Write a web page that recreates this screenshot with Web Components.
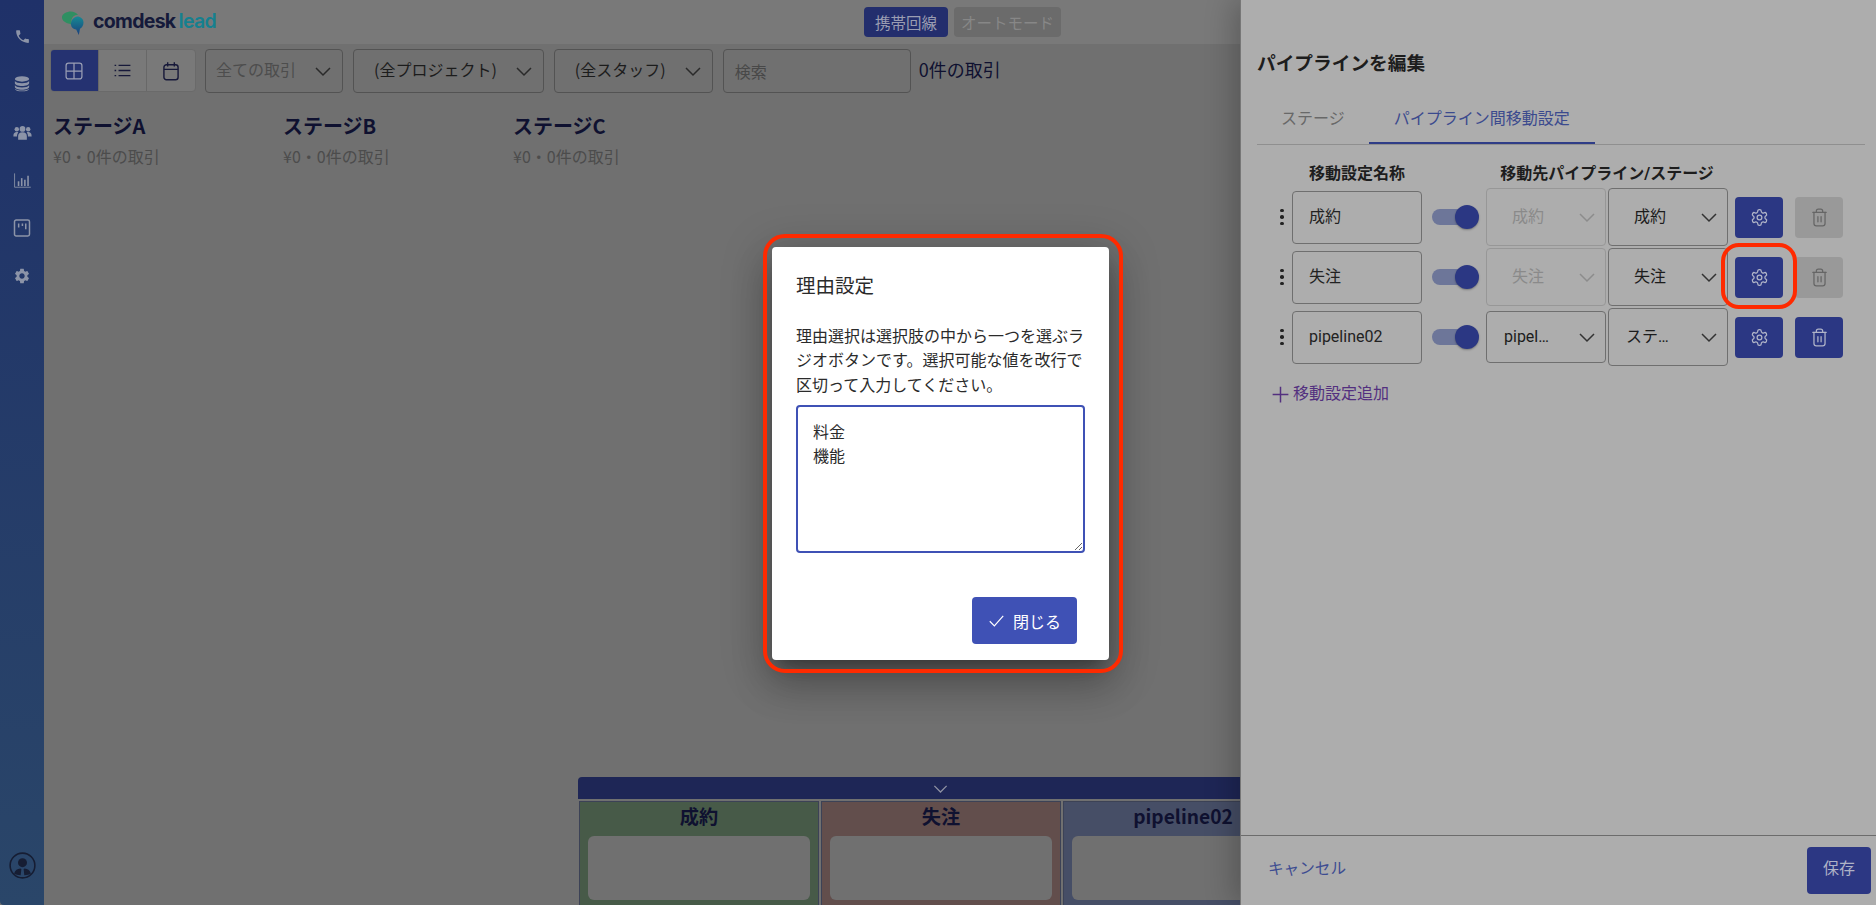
<!DOCTYPE html>
<html lang="ja">
<head>
<meta charset="utf-8">
<title>comdesk lead</title>
<style>
  html, body { margin: 0; height: 100%; overflow: hidden; background: #707070; }
  body { font-family: "Noto Sans CJK JP", "Noto Sans", sans-serif; }
</style>
</head>
<body>
<cd-app>
  <cd-sidebar slot="side"></cd-sidebar>
  <cd-header slot="head"></cd-header>
  <cd-toolbar slot="bar"></cd-toolbar>
  <cd-stage slot="stage" name="ステージA" sub="¥0・0件の取引"></cd-stage>
  <cd-stage slot="stage" name="ステージB" sub="¥0・0件の取引"></cd-stage>
  <cd-stage slot="stage" name="ステージC" sub="¥0・0件の取引"></cd-stage>
  <cd-drawer slot="bottom">
    <cd-drop name="成約" color="#475a48"></cd-drop>
    <cd-drop name="失注" color="#624e4c"></cd-drop>
    <cd-drop name="pipeline02" color="#464e66"></cd-drop>
  </cd-drawer>
  <cd-panel slot="over" heading="パイプラインを編集">
    <cd-move-row name="成約" a="成約" b="成約" locked></cd-move-row>
    <cd-move-row name="失注" a="失注" b="失注" locked marked></cd-move-row>
    <cd-move-row name="pipeline02" a="pipeline02" b="ステージA"></cd-move-row>
  </cd-panel>
  <cd-dialog slot="over" heading="理由設定">
    理由選択は選択肢の中から一つを選ぶラジオボタンです。選択可能な値を改行で区切って入力してください。
  </cd-dialog>
</cd-app>

<script>
(function() {
  const ICONS = {
    phone: '<path fill="currentColor" d="M6.6 10.8c1.4 2.8 3.8 5.1 6.6 6.6l2.2-2.2c.3-.3.7-.4 1-.2 1.1.4 2.3.6 3.6.6.6 0 1 .4 1 1V20c0 .6-.4 1-1 1C10.6 21 3 13.4 3 4c0-.6.4-1 1-1h3.5c.6 0 1 .4 1 1 0 1.3.2 2.5.6 3.6.1.3 0 .7-.2 1z"/>',
    database: '<g fill="currentColor"><ellipse cx="12" cy="5.2" rx="9.5" ry="3.7"/><path d="M2.5 8c1.4 1.9 5 3 9.5 3s8.100-1.100 9.500-3v3c0 2-4.200 3.600-9.500 3.600S2.500 13 2.500 11z"/><path d="M2.500 13.500c1.400 1.900 5 3 9.500 3s8.100-1.100 9.500-3V16c0 2-4.200 3.600-9.500 3.600S2.500 18 2.500 16z"/><path d="M2.500 18.300c1.400 1.500 5 2.400 9.500 2.400s8.100-.9 9.500-2.400c0 2-4.200 3.500-9.500 3.500s-9.500-1.500-9.500-3.500z"/></g>',
    users: '<g fill="currentColor"><circle cx="12" cy="7.500" r="3.600"/><circle cx="4.800" cy="8" r="2.800"/><circle cx="19.200" cy="8" r="2.800"/><path d="M6.500 21v-4.500c0-3 2-4.800 5.500-4.800s5.500 1.800 5.500 4.800V21z"/><path d="M.5 16c0-3 1.800-4.500 4.300-4.500.8 0 1.400.1 1.900.4-1 1.100-1.600 2.500-1.600 4.400v.7H.5z"/><path d="M23.500 16c0-3-1.800-4.500-4.300-4.500-.8 0-1.400.1-1.900.4 1 1.100 1.600 2.500 1.600 4.400v.7h4.600z"/></g>',
    chart: '<path d="M2 3v17.500h20.500" fill="none" stroke="currentColor" stroke-width="1.100"/><g fill="currentColor"><rect x="6" y="13" width="2" height="6"/><rect x="10" y="9" width="2" height="10"/><rect x="14" y="11" width="2" height="8"/><rect x="18" y="6" width="2" height="13"/></g>',
    board: '<rect x="3" y="2.500" width="18" height="19" rx="2" fill="none" stroke="currentColor" stroke-width="1.800"/><path d="M8 6.500v5M12.500 6.500v3M16.500 6.500v7" fill="none" stroke="currentColor" stroke-width="1.800"/>',
    cog: '<path fill="currentColor" d="M19.140 12.940c.04-.3.06-.61.06-.94 0-.32-.02-.64-.07-.94l2.030-1.580a.49.49 0 0 0 .12-.61l-1.920-3.320a.488.488 0 0 0-.59-.22l-2.390.96c-.5-.38-1.030-.7-1.620-.94l-.36-2.540a.484.484 0 0 0-.48-.41h-3.840c-.24 0-.43.17-.47.41l-.36 2.540c-.59.24-1.130.57-1.620.94l-2.390-.96c-.22-.08-.47 0-.59.22L2.740 8.870c-.12.21-.08.47.12.61l2.030 1.580c-.05.3-.09.63-.09.94s.02.64.07.94l-2.030 1.580a.49.49 0 0 0-.12.61l1.920 3.320c.12.22.37.29.59.22l2.390-.96c.5.38 1.030.7 1.620.94l.36 2.540c.05.24.24.41.48.41h3.840c.24 0 .44-.17.47-.41l.36-2.540c.59-.24 1.130-.56 1.620-.94l2.390.96c.22.08.47 0 .59-.22l1.920-3.320c.12-.22.07-.47-.12-.61l-2.010-1.580zM12 15.600c-1.980 0-3.600-1.620-3.600-3.600s1.620-3.600 3.600-3.600 3.600 1.620 3.600 3.600-1.620 3.600-3.600 3.600z"/>',
    avatar: '<circle cx="12" cy="12" r="11" fill="none" stroke="currentColor" stroke-width="1.400"/><circle cx="12" cy="9.500" r="4" fill="currentColor"/><path fill="currentColor" d="M4.500 19c1-3 3-4 5.500-4.300l1 .3-.6 5.600c-2.500-.2-4.500-.6-5.900-1.600zM19.500 19c-1-3-3-4-5.500-4.300l-1 .3.6 5.600c2.500-.2 4.500-.6 5.900-1.600z"/>',
    grid: '<g fill="none" stroke="currentColor" stroke-width="1.500"><rect x="2.500" y="2.500" width="19" height="19" rx="3"/><path d="M12 2.500v19M2.500 12h19"/></g>',
    list: '<g stroke="currentColor" fill="none" stroke-width="1.700"><path d="M7 5.500h15M7 12h15M7 18.500h15"/><path d="M2 5.500h2M2 12h2M2 18.500h2"/></g>',
    calendar: '<g fill="none" stroke="currentColor" stroke-width="1.700"><rect x="3.500" y="4.500" width="17" height="18" rx="3"/><path d="M3.500 10h17M8 1.500v5M16 1.500v5"/></g>',
    chevron: '<path d="M5 9l7 7 7-7" fill="none" stroke="currentColor" stroke-width="1.500"/>',
    gear: '<g fill="none" stroke="currentColor" stroke-width="1.600" stroke-linejoin="round"><path d="M12.220 2h-.44a2 2 0 0 0-2 2v.18a2 2 0 0 1-1 1.730l-.43.25a2 2 0 0 1-2 0l-.15-.08a2 2 0 0 0-2.730.73l-.22.38a2 2 0 0 0 .73 2.730l.15.1a2 2 0 0 1 1 1.720v.51a2 2 0 0 1-1 1.740l-.15.09a2 2 0 0 0-.73 2.730l.22.38a2 2 0 0 0 2.730.73l.15-.08a2 2 0 0 1 2 0l.43.25a2 2 0 0 1 1 1.730V20a2 2 0 0 0 2 2h.44a2 2 0 0 0 2-2v-.18a2 2 0 0 1 1-1.730l.43-.25a2 2 0 0 1 2 0l.15.08a2 2 0 0 0 2.730-.73l.22-.39a2 2 0 0 0-.73-2.730l-.15-.08a2 2 0 0 1-1-1.740v-.5a2 2 0 0 1 1-1.740l.15-.09a2 2 0 0 0 .73-2.730l-.22-.38a2 2 0 0 0-2.730-.73l-.15.08a2 2 0 0 1-2 0l-.43-.25a2 2 0 0 1-1-1.730V4a2 2 0 0 0-2-2z"/><circle cx="12" cy="12" r="3"/></g>',
    trash: '<g fill="none" stroke="currentColor" stroke-width="1.600" stroke-linejoin="round" stroke-linecap="round"><path d="M8 5V4a2.500 2.500 0 0 1 2.500-2.500h3A2.500 2.500 0 0 1 16 4v1"/><path d="M3.500 5.500h17"/><path d="M5 5.500v14A3 3 0 0 0 8 22.500h8a3 3 0 0 0 3-3v-14"/><path d="M10 11v6.500M14 11v6.500"/></g>',
    plus: '<path d="M12 3v18M3 12h18" fill="none" stroke="currentColor" stroke-width="1.700"/>',
    check: '<path d="M2.500 13l6.500 6.500L21.500 5.500" fill="none" stroke="currentColor" stroke-width="1.700"/>'
  };

  const define = (tag, markup, setup) => {
    const tpl = document.createElement('template');
    tpl.innerHTML = markup;
    customElements.define(tag, class extends HTMLElement {
      constructor() {
        super();
        this.attachShadow({mode: 'open'}).append(tpl.content.cloneNode(true));
      }
      connectedCallback() {
        if (setup) setup(this, this.shadowRoot);
      }
    });
  };

  define('cd-icon', `<style>:host{display:inline-flex;line-height:0}</style><svg viewBox="0 0 24 24"></svg>`, (el, root) => {
    let size = el.getAttribute('size') || 16, svg = root.querySelector('svg');
    svg.setAttribute('width', size);
    svg.setAttribute('height', size);
    svg.innerHTML = ICONS[el.getAttribute('name')];
  });

  define('cd-app', `
    <style>
      :host{display:grid;grid-template-columns:44px 1fr;width:1876px;height:905px;overflow:hidden;position:relative}
      .main{display:flex;flex-direction:column;min-width:0;height:905px;background:#707070}
      .stages{display:flex;padding-left:9px}
      .bottom{margin-top:auto}
    </style>
    <slot name="side"></slot>
    <div class="main">
      <slot name="head"></slot>
      <slot name="bar"></slot>
      <div class="stages"><slot name="stage"></slot></div>
      <div class="bottom"><slot name="bottom"></slot></div>
    </div>
    <slot name="over"></slot>`);

  define('cd-sidebar', `
    <style>
      :host{display:flex;flex-direction:column;align-items:center;width:44px;height:905px;padding-top:12px;box-sizing:border-box;
        background:linear-gradient(#1f3169,#2a4669);color:#8c94a8;border-bottom-left-radius:4px}
      .item{height:48px;display:flex;align-items:center;justify-content:center}
      .me{margin-top:auto;margin-bottom:26px;color:#161d33;line-height:0}
    </style>
    <div class="item"><cd-icon name="phone" size="17"></cd-icon></div>
    <div class="item"><cd-icon name="database" size="18"></cd-icon></div>
    <div class="item"><cd-icon name="users" size="19"></cd-icon></div>
    <div class="item"><cd-icon name="chart" size="19"></cd-icon></div>
    <div class="item"><cd-icon name="board" size="20"></cd-icon></div>
    <div class="item"><cd-icon name="cog" size="18"></cd-icon></div>
    <div class="me"><cd-icon name="avatar" size="27"></cd-icon></div>`);

  define('cd-header', `
    <style>
      :host{display:flex;align-items:flex-start;height:44px;background:#797979;box-sizing:border-box}
      .logo{width:820px;box-sizing:border-box;padding:11px 0 0 18px;display:flex;font:700 19.5px/20px Inter,"Noto Sans",sans-serif;letter-spacing:-.7px}
      svg{margin-right:9px;flex:none}
      .n{color:#151a3a}
      .l{color:#15808f;margin-left:3px;font-weight:600}
      .mode{height:30px;margin-top:7px;border-radius:4px;display:flex;align-items:center;justify-content:center;font-size:15.5px;line-height:20px}
      .on{width:84px;background:#232e6d;color:#9a9db2;margin-right:6px}
      .off{width:107px;background:#6b6b6b;color:#878787}
    </style>
    <div class="logo">
      <svg width="22" height="25" viewBox="0 0 22 25">
        <defs><linearGradient id="t" x1="0" y1="0" x2="0" y2="1"><stop offset="0" stop-color="#168a94"/><stop offset="1" stop-color="#1b3f7d"/></linearGradient></defs>
        <path fill="#2f8f62" d="M6 1c4-1.200 8 .6 10 3-3-.3-6 1.700-6.500 5-.3 2 .3 3.800 1 5-1-.1-2-.6-2.800-1.300C3.500 12.200 0 9.800 0 6.300 0 3.600 2.500 1.800 6 1z"/>
        <path fill="url(#t)" d="M14 5.500c4-.6 7.500 2 7.500 6 0 3-1.400 5-3.500 6.200l-1.200 6.300-2.600-5.600c-3.500-.2-5.500-2.800-5.200-6.200.2-3 2.300-5.800 6-6.700z"/>
      </svg>
      <span class="n">comdesk</span><span class="l">lead</span>
    </div>
    <div class="mode on">携帯回線</div>
    <div class="mode off">オートモード</div>`);

  define('cd-select', `
    <style>
      :host{display:flex;align-items:center;box-sizing:border-box;height:var(--h,44px);border:1px solid var(--line,#535353);border-radius:4px;
        color:var(--ink,#1c1c1c);font-size:16px;line-height:24px;white-space:nowrap}
      .t{padding-left:var(--pl,20px);padding-right:var(--pr,0);padding-bottom:var(--shift,4px);overflow:hidden;text-overflow:ellipsis;
        width:var(--tw,auto);text-align:var(--ta,left);box-sizing:content-box}
      cd-icon{margin-left:var(--ml,15px);margin-right:var(--mr,7px);color:var(--arrow,#2a2a2a)}
    </style>
    <div class="t"><slot></slot></div>
    <cd-icon name="chevron" size="24"></cd-icon>`);

  define('cd-toolbar', `
    <style>
      :host{display:flex;gap:10px;padding:5px 0 0 6px;height:45px;color:#0f1130;font-size:16px}
      .views{display:flex;height:43px;width:146px;margin-right:-1px;box-sizing:border-box;border-radius:4px;overflow:hidden;background:#797979;border:1px solid #6a6a6a}
      .views div{flex:1;display:flex;align-items:center;justify-content:center;color:#17193a;border-left:1px solid #686868}
      .views .on{background:#253271;color:#9a9eb4;border-left:0;margin:-1px 0 -1px -1px}
      .search{box-sizing:border-box;width:188px;height:44px;border:1px solid #535353;border-radius:4px;padding:0 11px;display:flex;align-items:center;color:#484848;line-height:24px}
      .count{font-size:18px;line-height:40px;font-weight:400;margin-left:-2px}
      .first{--pl:10px;--ink:#4d4d4d}
    </style>
    <div class="views">
      <div class="on"><cd-icon name="grid" size="20"></cd-icon></div>
      <div><cd-icon name="list" size="19"></cd-icon></div>
      <div><cd-icon name="calendar" size="20"></cd-icon></div>
    </div>
    <cd-select class="first">全ての取引</cd-select>
    <cd-select>(全プロジェクト)</cd-select>
    <cd-select>(全スタッフ)</cd-select>
    <div class="search">検索</div>
    <div class="count">0件の取引</div>`);

  define('cd-stage', `
    <style>
      :host{display:block;width:230px;padding-top:18px}
      .n{font-weight:700;font-size:20px;line-height:28px;color:#0f1130}
      .s{font-size:16px;line-height:22px;color:#4c4c4c;margin-top:5px}
    </style>
    <div class="n"></div><div class="s"></div>`, (el, root) => {
    root.querySelector('.n').textContent = el.getAttribute('name');
    root.querySelector('.s').textContent = el.getAttribute('sub');
  });

  define('cd-drawer', `
    <style>
      :host{display:block;margin-left:534px;width:728px;height:128px;overflow:hidden}
      .bar{height:22px;background:#1e2656;border-radius:4px 4px 0 0;display:flex;align-items:center;justify-content:center;color:#8f92a3;box-sizing:border-box;width:725px}
      .cards{display:flex;gap:2px;padding:2px 0 0 1px}
    </style>
    <div class="bar"><cd-icon name="chevron" size="21"></cd-icon></div>
    <div class="cards"><slot></slot></div>`);

  define('cd-drop', `
    <style>
      :host{display:block;box-sizing:border-box;width:240px;height:108px;border:1px solid #3c4256;padding:0 7px}
      .n{text-align:center;font-weight:700;font-size:19.2px;line-height:28px;height:34px;color:#0f1130;white-space:nowrap}
      .b{height:64px;background:#707070;border-radius:6px;margin:0 1px}
    </style>
    <div class="n"></div><div class="b"></div>`, (el, root) => {
    root.querySelector('.n').textContent = el.getAttribute('name');
    el.style.background = el.getAttribute('color');
  });

  define('cd-toggle', `
    <style>
      :host{display:block;position:relative;width:48px;height:24px}
      .track{position:absolute;left:0;top:4px;width:44px;height:16px;border-radius:8px;background:#6d7699}
      .thumb{position:absolute;right:1px;top:0;width:24px;height:24px;border-radius:50%;background:#2b3783;box-shadow:0 1px 2px rgba(0,0,0,.3)}
    </style>
    <div class="track"></div><div class="thumb"></div>`);

  define('cd-square', `
    <style>
      :host{display:flex;align-items:center;justify-content:center;width:48px;height:41px;border-radius:4px;background:#2b3783;color:#b0b4c8}
      :host([off]){background:#999;color:#666}
    </style>
    <slot></slot>`);

  define('cd-move-row', `
    <style>
      :host{display:flex;align-items:center;height:60px;padding-left:31px;position:relative;color:#222;font-size:16px;line-height:24px}
      .dots{width:20px;display:flex;flex-direction:column;align-items:center;gap:3px}
      .dots i{width:3.500px;height:3.500px;border-radius:50%;background:#222}
      .name{box-sizing:border-box;width:130px;height:53px;border:1px solid #6f6f6f;border-radius:4px;padding-left:16px;display:flex;align-items:center;margin-right:10px}
      cd-toggle{margin-right:6px}
      cd-select{width:120px;--h:58px;--line:#6f6f6f;--shift:0;--pl:17px;--tw:48px;--ta:center;--ml:23px;--mr:0;--arrow:#333}
      #a{margin-right:2px}
      #b{margin-right:7px}
      cd-square + cd-square{margin-left:12px}
      :host([locked]) #a{--line:#979797;--ink:#8a8a8a;--arrow:#8c8c8c}
      :host([short]) #a{--h:52px}
      .mark{display:none;position:absolute;left:480px;top:-4px;width:76px;height:66px;box-sizing:border-box;border:4.500px solid #ff2a00;border-radius:18px}
      :host([marked]) .mark{display:block}
    </style>
    <div class="dots"><i></i><i></i><i></i></div>
    <div class="name"></div>
    <cd-toggle></cd-toggle>
    <cd-select id="a"></cd-select>
    <cd-select id="b"></cd-select>
    <cd-square><cd-icon name="gear" size="19"></cd-icon></cd-square>
    <cd-square class="del"><cd-icon name="trash" size="19"></cd-icon></cd-square>
    <div class="mark"></div>`, (el, root) => {
    root.querySelector('.name').textContent = el.getAttribute('name');
    root.querySelector('#a').textContent = el.getAttribute('a');
    root.querySelector('#b').textContent = el.getAttribute('b');
    if (el.hasAttribute('locked')) root.querySelector('.del').setAttribute('off', '');
    else el.setAttribute('short', '');
  });

  define('cd-panel', `
    <style>
      :host{position:absolute;top:0;right:0;bottom:0;width:636px;box-sizing:border-box;background:#adadad;border-left:1px solid #777;
        box-shadow:-6px 0 28px rgba(0,0,0,.24);display:flex;flex-direction:column;font-family:Roboto,"Noto Sans CJK JP",sans-serif;color:#1d1d1d}
      h2{margin:0;padding:48px 0 0 16px;font-size:18.700px;line-height:28px;font-weight:700;font-family:"Noto Sans CJK JP",sans-serif;height:48px}
      .tabs{display:flex;margin:0 11px 0 16px;height:49px;box-sizing:border-box;border-bottom:1px solid #8f8f8f;font-size:16px;color:#686868}
      .tabs div{padding:0 24px;height:48px;line-height:46px;box-sizing:border-box}
      .tabs .on{padding:0 25px;color:#3b4a8e;border-bottom:2px solid #2f3d87}
      .cols{display:flex;padding-left:51px;margin-top:17px;height:25px;font-size:16px;line-height:24px;font-weight:700;text-align:center}
      .cols div:first-child{width:130px;margin-right:64px}
      .cols div:last-child{width:242px}
      .add{display:flex;align-items:center;gap:2px;padding-left:29px;margin-top:15px;height:24px;line-height:24px;font-size:16px;color:#53307f}
      .foot{margin-top:auto;height:69px;border-top:1px solid #6c6c6c;display:flex;align-items:center;justify-content:space-between;padding:0 5px 0 27px}
      .cancel{color:#3d4c91;font-size:15.600px;line-height:20px;padding-bottom:3px}
      .save{width:64px;height:47px;border-radius:4px;background:#2c3783;color:#aeb2c6;display:flex;align-items:center;justify-content:center;font-size:16px;line-height:20px;padding-bottom:3px;box-sizing:border-box}
    </style>
    <h2></h2>
    <div class="tabs"><div>ステージ</div><div class="on">パイプライン間移動設定</div></div>
    <div class="cols"><div>移動設定名称</div><div>移動先パイプライン/ステージ</div></div>
    <slot></slot>
    <div class="add"><cd-icon name="plus" size="21"></cd-icon>移動設定追加</div>
    <div class="foot"><div class="cancel">キャンセル</div><div class="save">保存</div></div>`, (el, root) => {
    root.querySelector('h2').textContent = el.getAttribute('heading');
  });

  define('cd-dialog', `
    <style>
      :host{position:absolute;inset:0;display:flex;align-items:center;justify-content:center;padding:2px 0 0 5px;box-sizing:border-box;font-family:Roboto,"Noto Sans CJK JP",sans-serif}
      .box{position:relative;width:337px;height:413px;box-sizing:border-box;background:#fff;border-radius:4px;padding:24px;color:#2b2b2b;
        box-shadow:0 11px 15px -7px rgba(0,0,0,.3),0 24px 38px 3px rgba(0,0,0,.2),0 9px 46px 8px rgba(0,0,0,.18)}
      h3{margin:0 0 22px;font-size:19.500px;font-weight:400;line-height:32px}
      p{margin:0 0 7px;font-size:16px;line-height:24.300px}
      textarea{display:block;box-sizing:border-box;width:289px;height:148px;margin:0;padding:14px 15px;border:2px solid #3f51b5;border-radius:4px;outline:0;
        font:16px/24px Roboto,"Noto Sans CJK JP",sans-serif;color:#2b2b2b;resize:vertical;background:#fff}
      .close{position:absolute;left:200px;top:350px;width:105px;height:47px;border-radius:4px;background:#3f51b5;color:#fff;display:flex;align-items:center;justify-content:center;gap:8px;font-size:16px}
      .ring{position:absolute;left:-9px;top:-13px;width:360px;height:439px;box-sizing:border-box;border:4.500px solid #ff2a00;border-radius:22px;pointer-events:none}
    </style>
    <div class="box">
      <h3></h3>
      <p><slot></slot></p>
      <textarea spellcheck="false">料金
機能</textarea>
      <div class="close"><cd-icon name="check" size="17"></cd-icon>閉じる</div>
      <div class="ring"></div>
    </div>`, (el, root) => {
    root.querySelector('h3').textContent = el.getAttribute('heading');
  });
})();
</script>
</body>
</html>
